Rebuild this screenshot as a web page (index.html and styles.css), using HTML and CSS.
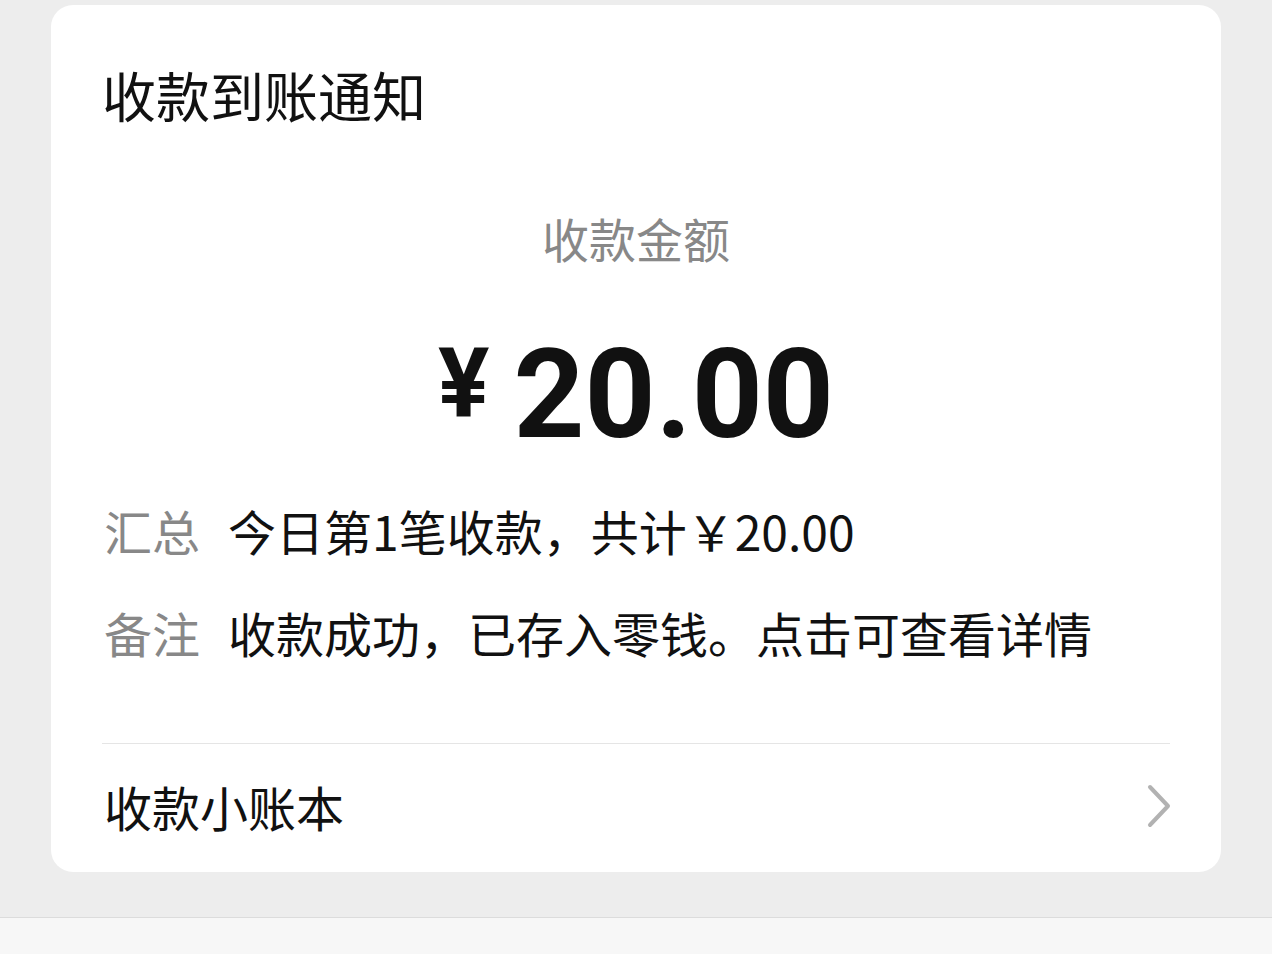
FILE: index.html
```html
<!DOCTYPE html>
<html lang="zh-CN">
<head>
  <meta charset="UTF-8">
  <title>收款到账通知</title>
  <link rel="stylesheet" href="styles.css">
</head>
<body>
  <div class="page">
    <div class="notice-card">
      <h1 class="notice-title">收款到账通知</h1>
      <p class="amount-label">收款金额</p>
      <div class="amount">
        <span class="amount-yen">¥</span>
        <span class="amount-num">20.00</span>
      </div>
      <div class="info-row">
        <span class="info-key">汇总</span>
        <span class="info-value">今日第1笔收款，共计￥20.00</span>
      </div>
      <div class="info-row">
        <span class="info-key">备注</span>
        <span class="info-value">收款成功，已存入零钱。点击可查看详情</span>
      </div>
      <div class="ledger-link">
        <span>收款小账本</span>
        <svg class="chevron" width="26" height="44" viewBox="0 0 26 44">
          <path d="M4 3 L22 22 L4 41" fill="none" stroke="#b2b2b2" stroke-width="4" stroke-linecap="round" stroke-linejoin="round"/>
        </svg>
      </div>
    </div>
  </div>
  <div class="bottom-bar"></div>
</body>
</html>
```

FILE: styles.css
```css
body {
  margin: 0;
  background-color: #ededed;
  font-family: "Noto Sans CJK SC", "Noto Sans", sans-serif;
  color: #111;
}
.page {
  height: 917px;
  padding: 5px 51px 0;
  box-sizing: border-box;
}
.notice-card {
  background-color: #fff;
  border-radius: 22px;
  height: 867px;
  padding: 0 51px 0 51px;
  box-sizing: border-box;
  display: flex;
  flex-direction: column;
}
.notice-title {
  margin: 51px 0 0;
  font-size: 54px;
  font-weight: normal;
  line-height: 78px;
}
.amount-label {
  margin: 71px 0 0;
  text-align: center;
  font-size: 47px;
  line-height: 66px;
  color: #888;
}
.amount {
  margin-top: 72px;
  display: flex;
  justify-content: center;
  align-items: flex-start;
  gap: 24px;
  font-family: Roboto, "Liberation Sans", sans-serif;
  font-weight: bold;
  line-height: 1;
  padding-left: 4px;
}
.amount-yen {
  font-size: 96px;
  margin-top: -8px;
  margin-left: -4px;
}
.amount-num {
  font-size: 124px;
  margin-top: -10px;
}
.info-row {
  display: flex;
  gap: 28px;
  font-size: 48px;
  line-height: 70px;
  margin-top: 38px;
}
.info-row + .info-row {
  margin-top: 32px;
}
.info-key {
  color: #888;
  padding-left: 2px;
}
.ledger-link {
  margin-top: 76px;
  border-top: 1px solid #e5e5e5;
  flex: 1;
  display: flex;
  align-items: center;
  justify-content: space-between;
  font-size: 48px;
  padding-bottom: 4px;
}
.ledger-link span {
  padding-left: 2px;
}
.chevron {
  margin-right: -2px;
}
.bottom-bar {
  height: 37px;
  background-color: #f7f7f7;
  border-top: 1px solid #dcdcdc;
}
```
